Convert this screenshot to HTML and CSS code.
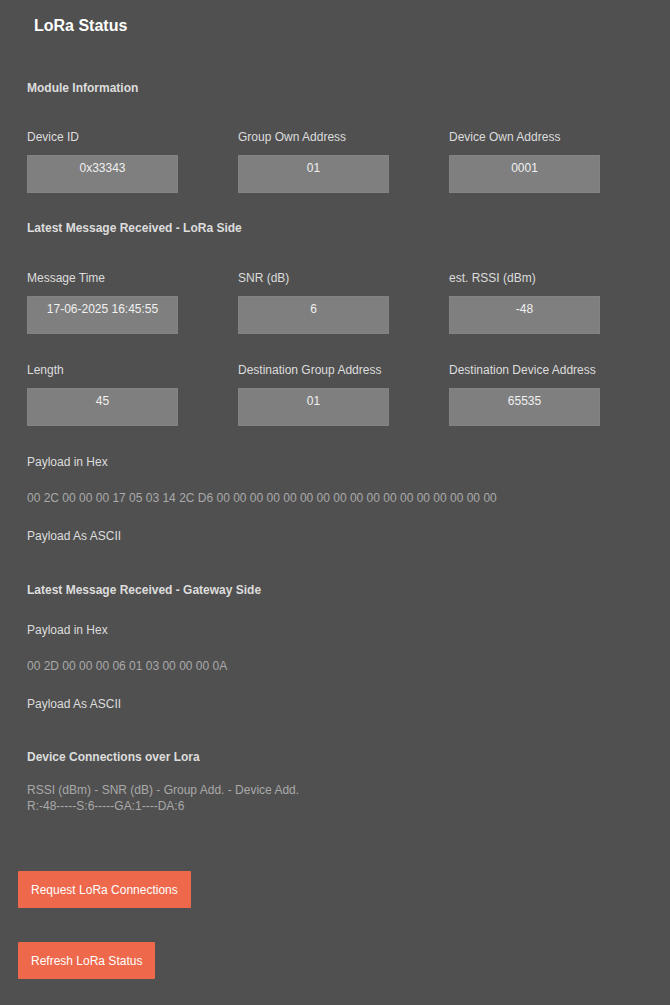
FILE: index.html
```html
<!DOCTYPE html>
<html>
<head>
<meta charset="utf-8">
<link rel="stylesheet" href="styles.css">
</head>
<body>
<div class="page">
  <h1 class="title">LoRa Status</h1>

  <h2 class="heading h-module">Module Information</h2>
  <div class="grid g1">
    <div class="field"><div class="label">Device ID</div><div class="box">0x33343</div></div>
    <div class="field"><div class="label">Group Own Address</div><div class="box">01</div></div>
    <div class="field"><div class="label">Device Own Address</div><div class="box">0001</div></div>
  </div>

  <h2 class="heading h-lora">Latest Message Received - LoRa Side</h2>
  <div class="grid g2">
    <div class="field"><div class="label">Message Time</div><div class="box">17-06-2025 16:45:55</div></div>
    <div class="field"><div class="label">SNR (dB)</div><div class="box">6</div></div>
    <div class="field"><div class="label">est. RSSI (dBm)</div><div class="box">-48</div></div>
  </div>
  <div class="grid g3">
    <div class="field"><div class="label">Length</div><div class="box">45</div></div>
    <div class="field"><div class="label">Destination Group Address</div><div class="box">01</div></div>
    <div class="field"><div class="label">Destination Device Address</div><div class="box">65535</div></div>
  </div>

  <div class="label p-hex1">Payload in Hex</div>
  <div class="data p-hexval">00 2C 00 00 00 17 05 03 14 2C D6 00 00 00 00 00 00 00 00 00 00 00 00 00 00 00 00 00</div>
  <div class="label p-ascii">Payload As ASCII</div>

  <h2 class="heading h-gw">Latest Message Received - Gateway Side</h2>
  <div class="label p-hex2">Payload in Hex</div>
  <div class="data p-hexval">00 2D 00 00 00 06 01 03 00 00 00 0A</div>
  <div class="label p-ascii">Payload As ASCII</div>

  <h2 class="heading h-conn">Device Connections over Lora</h2>
  <div class="data conn">RSSI (dBm) - SNR (dB) - Group Add. - Device Add.<br>R:-48-----S:6-----GA:1----DA:6</div>

  <div class="buttons">
    <button class="btn">Request LoRa Connections</button>
    <button class="btn">Refresh LoRa Status</button>
  </div>
</div>
</body>
</html>
```
FILE: styles.css
```css
html, body {
  margin: 0;
  padding: 0;
  background: #505050;
}
body {
  font-family: "Liberation Sans", Arial, sans-serif;
  font-size: 12px;
  color: #dddddd;
}
.page {
  padding: 17px 0 25px 27px;
}
.title {
  margin: 0 0 0 7px;
  font-size: 16px;
  line-height: 18px;
  font-weight: bold;
  color: #ffffff;
}
.heading {
  margin: 0;
  font-size: 12px;
  line-height: 16px;
  font-weight: bold;
  color: #dddddd;
}
.h-module { margin-top: 45px; }
.h-lora { margin-top: 27px; }
.h-gw { margin-top: 38px; }
.h-conn { margin-top: 37px; }
.grid {
  display: grid;
  grid-template-columns: 151px 151px 151px;
  column-gap: 60px;
}
.g1 { margin-top: 33px; }
.g2 { margin-top: 34px; }
.g3 { margin-top: 28px; }
.label {
  line-height: 16px;
  color: #dddddd;
}
.field .label {
  margin-bottom: 10px;
}
.box {
  box-sizing: border-box;
  height: 38px;
  background: #7f7f7f;
  border: 1px solid #838383;
  color: #f0f0f0;
  text-align: center;
  line-height: 16px;
  padding-top: 4px;
}
.p-hex1 { margin-top: 28px; }
.p-hex2 { margin-top: 24px; }
.p-hexval { margin-top: 20px; }
.p-ascii { margin-top: 22px; }
.data {
  line-height: 16px;
  color: #a9a9a9;
}
.conn { margin-top: 17px; }
.buttons {
  margin-left: -9px;
  margin-top: 57px;
  display: flex;
  flex-direction: column;
  align-items: flex-start;
  gap: 34px;
}
.btn {
  height: 37px;
  padding: 0 13px;
  border: none;
  border-radius: 1px;
  background: #ee684b;
  color: #ffffff;
  font-family: "Liberation Sans", Arial, sans-serif;
  font-size: 12px;
  cursor: pointer;
}
```
